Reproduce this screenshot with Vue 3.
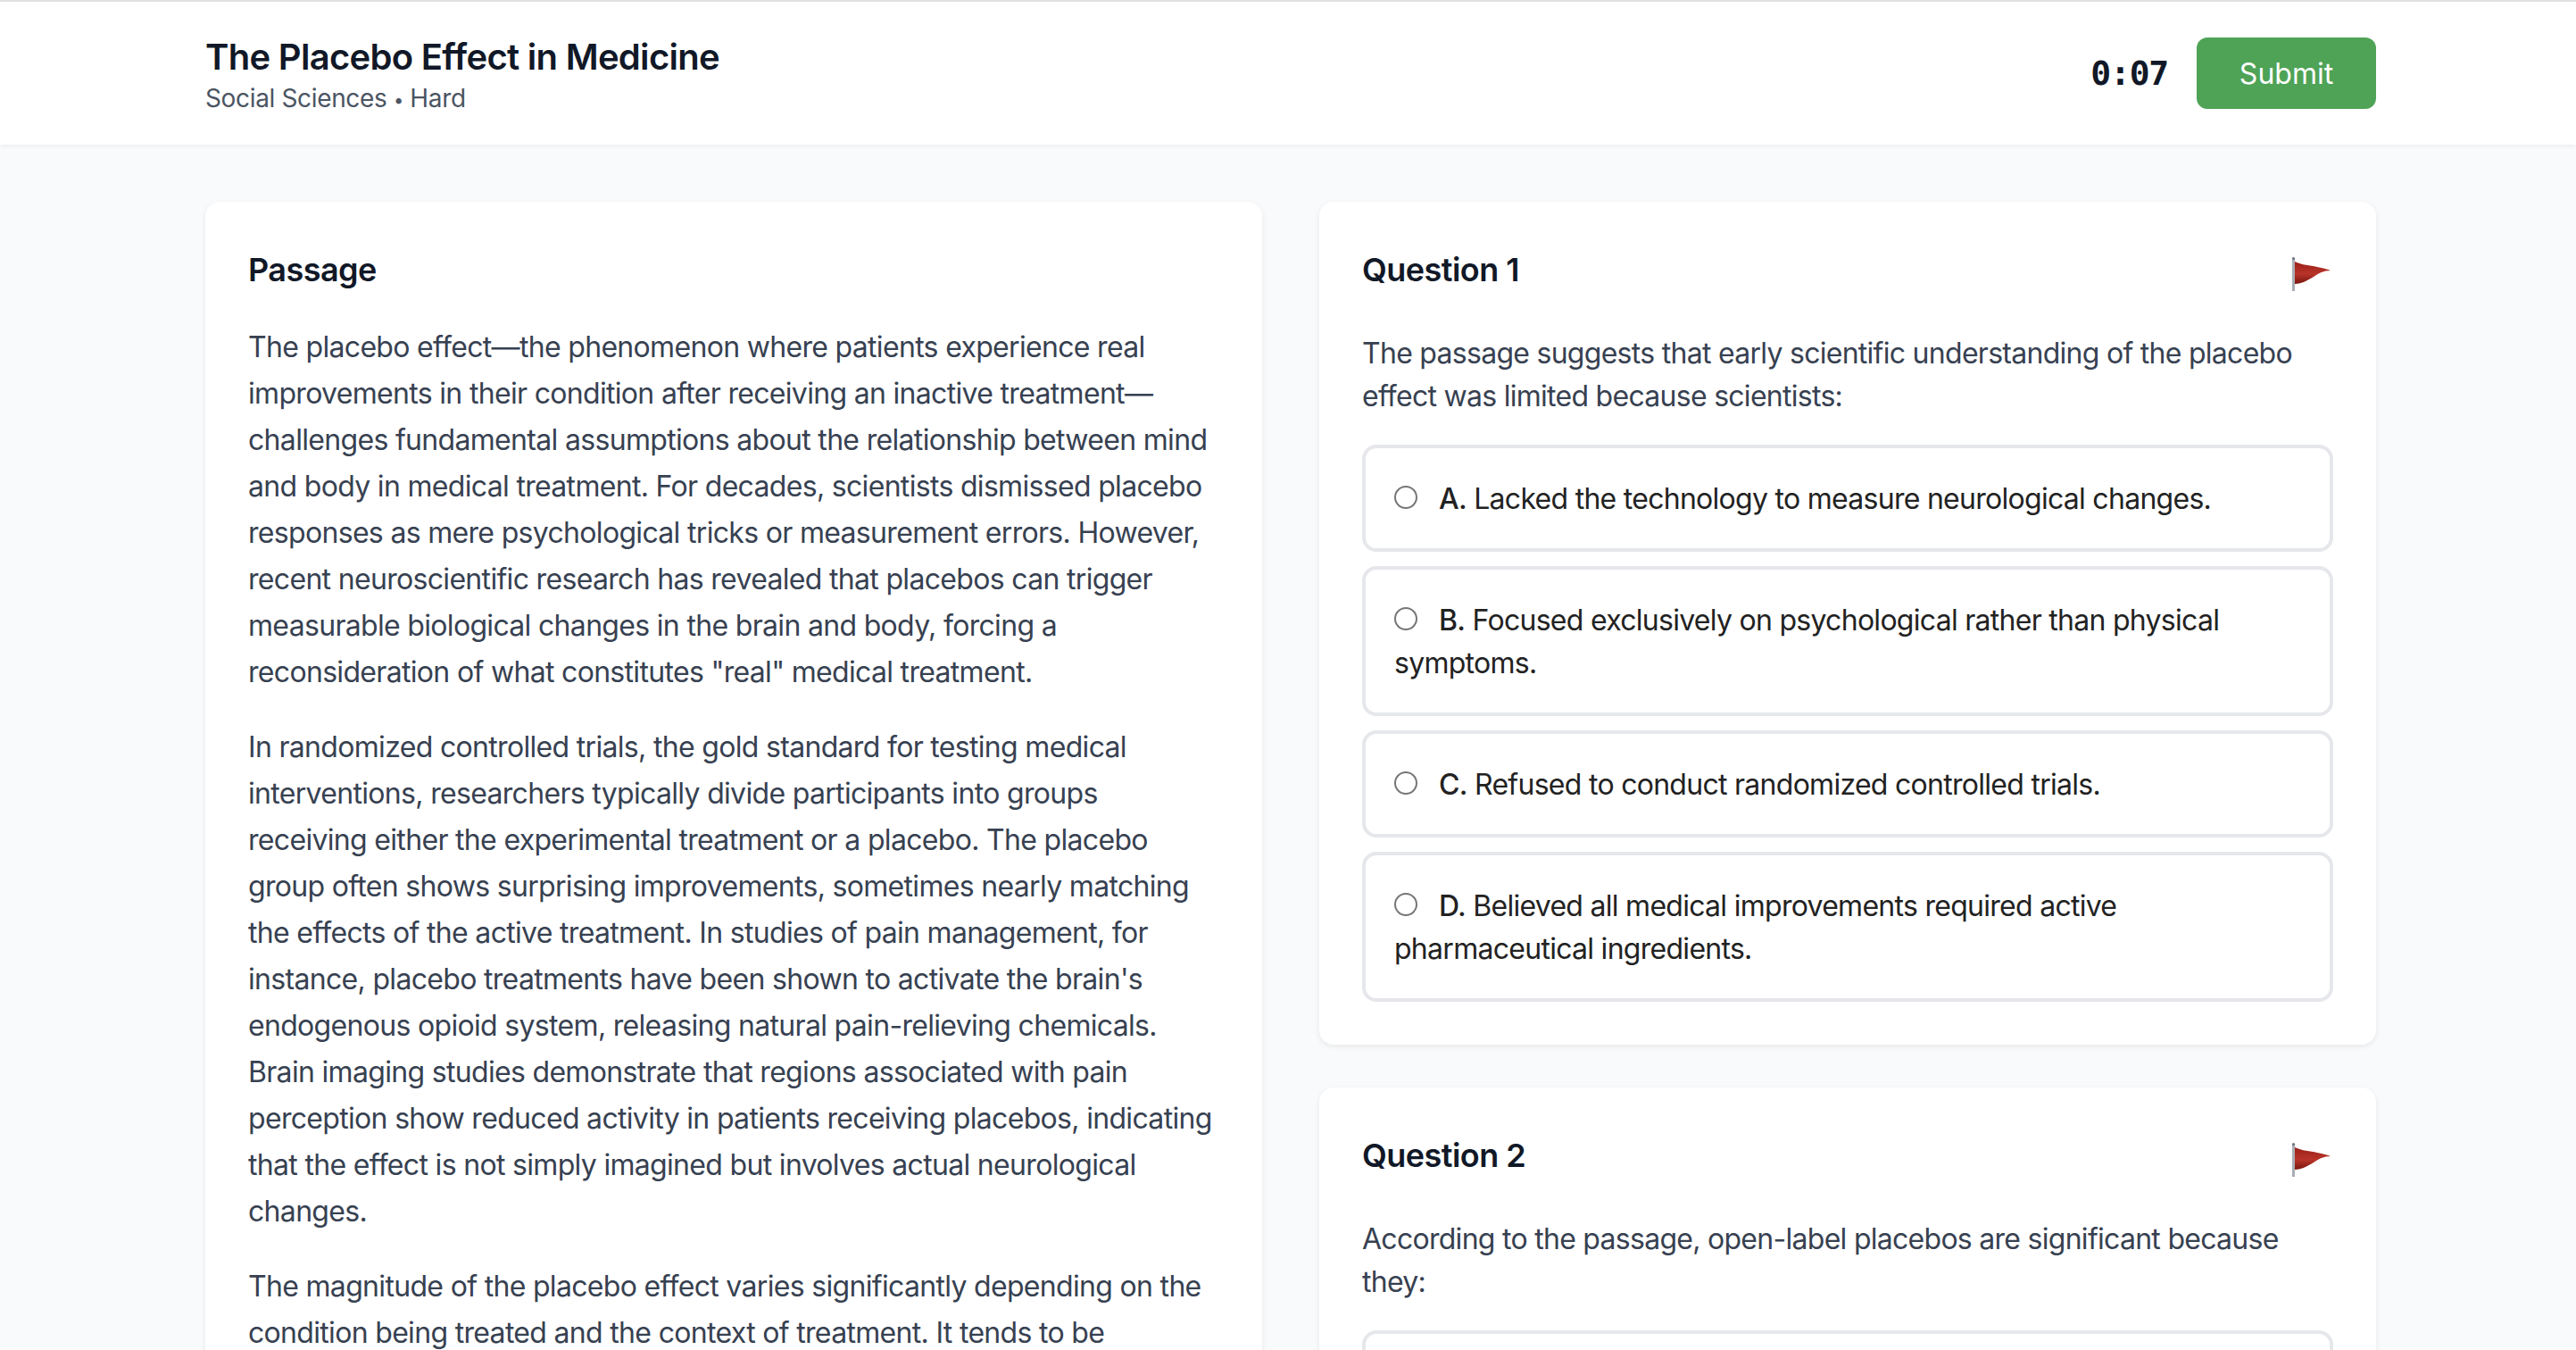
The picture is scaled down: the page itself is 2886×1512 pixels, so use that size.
<template>
  <div class="test-page">
    <!-- top bar -->
    <header class="topbar">
      <div class="topbar-inner">
        <div>
          <h1 class="test-title">The Placebo Effect in Medicine</h1>
          <p class="test-meta">Social Sciences <span class="meta-dot">•</span> Hard</p>
        </div>
        <div class="topbar-right">
          <span class="timer">0:07</span>
          <button class="submit-button">Submit</button>
        </div>
      </div>
    </header>

    <main class="content">
      <!-- passage -->
      <section class="card passage-card">
        <h2 class="card-title passage-title">Passage</h2>
        <p v-for="(para, index) in passage" :key="index" class="passage-text">{{ para }}</p>
      </section>

      <!-- questions -->
      <div class="questions">
        <section v-for="question in questions" :key="question.id" class="card">
          <div class="question-head">
            <h2 class="card-title">Question {{ question.id }}</h2>
            <button class="flag-button" aria-label="Flag question">
              <svg width="48" height="48" viewBox="0 0 48 48">
                <defs>
                  <linearGradient :id="'flag' + question.id" x1="0" y1="0" x2="0" y2="1">
                    <stop offset="0" stop-color="#9c2018" />
                    <stop offset="0.55" stop-color="#b8342a" />
                    <stop offset="1" stop-color="#7a160f" />
                  </linearGradient>
                </defs>
                <rect x="2" y="5" width="3" height="37" fill="#a9adb5" />
                <circle cx="3.5" cy="5.5" r="1.6" fill="#6d7480" />
                <path
                  d="M5 9 C13 13 22 13 30 15 C37 16.5 42 17.5 45 19 C37 19 32 22 26 26 C18 31 11 34 5 34 Z"
                  :fill="'url(#flag' + question.id + ')'"
                />
              </svg>
            </button>
          </div>
          <p class="question-text">{{ question.text }}</p>
          <div class="options">
            <label v-for="option in question.options" :key="option.key" class="option">
              <input type="radio" :name="'q' + question.id" class="radio" />
              <span class="option-key">{{ option.key }}.</span> {{ option.text }}
            </label>
          </div>
        </section>
      </div>
    </main>
  </div>
</template>

<script setup>
const passage = [
  'The placebo effect—the phenomenon where patients experience real improvements in their condition after receiving an inactive treatment—challenges fundamental assumptions about the relationship between mind and body in medical treatment. For decades, scientists dismissed placebo responses as mere psychological tricks or measurement errors. However, recent neuroscientific research has revealed that placebos can trigger measurable biological changes in the brain and body, forcing a reconsideration of what constitutes "real" medical treatment.',
  "In randomized controlled trials, the gold standard for testing medical interventions, researchers typically divide participants into groups receiving either the experimental treatment or a placebo. The placebo group often shows surprising improvements, sometimes nearly matching the effects of the active treatment. In studies of pain management, for instance, placebo treatments have been shown to activate the brain's endogenous opioid system, releasing natural pain-relieving chemicals. Brain imaging studies demonstrate that regions associated with pain perception show reduced activity in patients receiving placebos, indicating that the effect is not simply imagined but involves actual neurological changes.",
  'The magnitude of the placebo effect varies significantly depending on the condition being treated and the context of treatment. It tends to be',
]

const questions = [
  {
    id: 1,
    text: 'The passage suggests that early scientific understanding of the placebo effect was limited because scientists:',
    options: [
      { key: 'A', text: 'Lacked the technology to measure neurological changes.' },
      { key: 'B', text: 'Focused exclusively on psychological rather than physical symptoms.' },
      { key: 'C', text: 'Refused to conduct randomized controlled trials.' },
      { key: 'D', text: 'Believed all medical improvements required active pharmaceutical ingredients.' },
    ],
  },
  {
    id: 2,
    text: 'According to the passage, open-label placebos are significant because they:',
    options: [{ key: 'A', text: '' }],
  },
]
</script>

<style>
html,
body {
  margin: 0;
  height: 100%;
  overflow: hidden;
  background: #f9fafb;
}
</style>

<style scoped>
.test-page {
  height: 1512px;
  overflow: hidden;
  background: #f9fafb;
  font-family: Inter, "Liberation Sans", sans-serif;
}

/* top bar */
.topbar {
  height: 162px;
  box-sizing: border-box;
  background: #fff;
  border-top: 2px solid #e2e2e2;
  box-shadow: 0 2px 4px rgba(0, 0, 0, 0.05);
  padding: 0 224px 0 230px;
}

.topbar-inner {
  height: 100%;
  display: flex;
  align-items: center;
  justify-content: space-between;
}

.test-title {
  margin: 0;
  padding-top: 2px;
  font-size: 40px;
  line-height: 60px;
  font-weight: 600;
  letter-spacing: -0.7px;
  color: #111827;
}

.test-meta {
  margin: -4px 0 0;
  font-size: 28px;
  line-height: 40px;
  letter-spacing: -0.35px;
  color: #4b5563;
}

.meta-dot {
  font-size: 20px;
  vertical-align: 1px;
}

.topbar-right {
  display: flex;
  align-items: center;
  gap: 32px;
}

.timer {
  font-family: "DejaVu Sans Mono", monospace;
  font-size: 38px;
  letter-spacing: -1.2px;
  font-weight: 700;
  color: #111827;
}

.submit-button {
  width: 201px;
  height: 80px;
  border: none;
  border-radius: 12px;
  background: #4ea356;
  color: #fff;
  font-family: inherit;
  font-size: 32px;
  font-weight: 400;
}

/* main layout */
.content {
  display: grid;
  grid-template-columns: 1fr 1fr;
  gap: 64px;
  align-items: start;
  padding: 64px 224px 0 230px;
}

.questions {
  display: flex;
  flex-direction: column;
  gap: 48px;
}

.card {
  background: #fff;
  border-radius: 16px;
  padding: 48px;
  box-shadow: 0 2px 6px rgba(0, 0, 0, 0.08);
}

.card-title {
  margin: 0;
  font-size: 36px;
  line-height: 56px;
  font-weight: 600;
  letter-spacing: -0.55px;
  color: #111827;
}

.passage-title {
  margin-bottom: 33px;
}

.passage-text {
  margin: 0 0 32px;
  font-size: 32px;
  line-height: 52px;
  letter-spacing: -0.68px;
  color: #374151;
}

/* questions */
.question-head {
  display: flex;
  align-items: flex-start;
  justify-content: space-between;
  margin-bottom: 34px;
  height: 64px;
}

.flag-button {
  padding: 0;
  border: none;
  background: none;
  display: block;
  margin-top: 10px;
}

.flag-button svg {
  display: block;
}

.question-text {
  margin: 0 0 30px;
  font-size: 32px;
  line-height: 48px;
  letter-spacing: -0.72px;
  color: #374151;
}

.options {
  display: flex;
  flex-direction: column;
  gap: 16px;
}

.option {
  display: block;
  border: 4px solid #e5e7eb;
  border-radius: 16px;
  padding: 33px 32px 31px;
  font-size: 32px;
  line-height: 48px;
  letter-spacing: -0.72px;
  color: #222;
}

.option-key {
  font-weight: 500;
}

.radio {
  appearance: none;
  width: 26px;
  height: 26px;
  margin: 0 24px 0 0;
  border: 2px solid #767676;
  border-radius: 50%;
  background: #fff;
  vertical-align: 0;
  box-sizing: border-box;
}
</style>
